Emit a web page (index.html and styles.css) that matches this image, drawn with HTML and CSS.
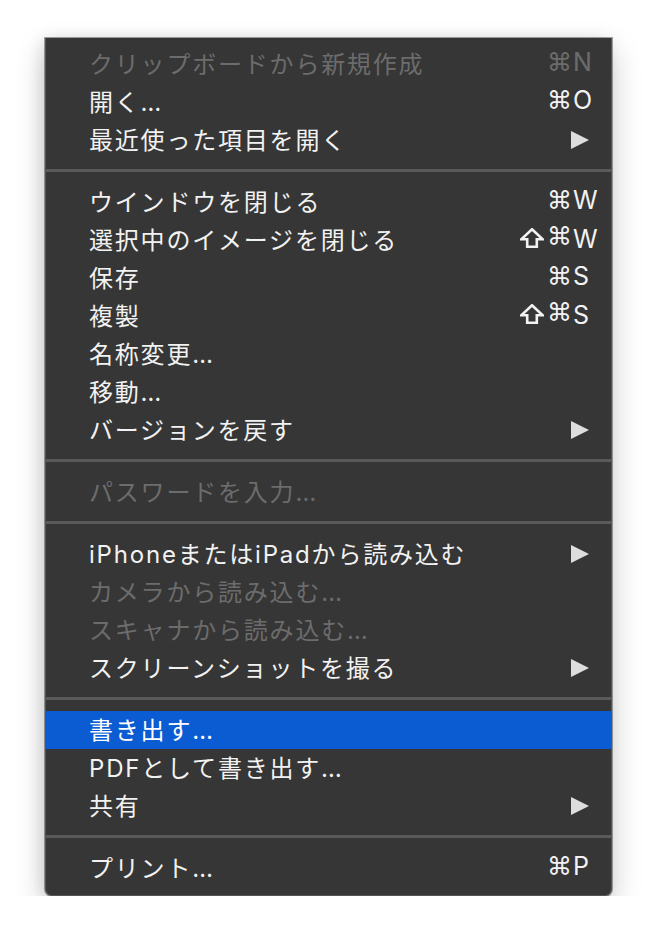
FILE: index.html
```html
<!DOCTYPE html>
<html lang="ja">

<head>
  <meta charset="UTF-8" />
  <meta name="viewport" content="width=device-width, initial-scale=1.0" />
  <title>ファイル メニュー</title>
  <link rel="stylesheet" href="styles.css">
</head>

<body>
  <div class="menu">
    <div class="item disabled"><span class="label">クリップボードから新規作成</span><span class="keys"><span class="mods">⌘</span><span class="key">N</span></span></div>
    <div class="item"><span class="label">開く…</span><span class="keys"><span class="mods">⌘</span><span class="key">O</span></span></div>
    <div class="item"><span class="label">最近使った項目を開く</span><span class="arrow"></span></div>

    <div class="sep"></div>

    <div class="item"><span class="label">ウインドウを閉じる</span><span class="keys"><span class="mods">⌘</span><span class="key">W</span></span></div>
    <div class="item"><span class="label">選択中のイメージを閉じる</span><span class="keys"><span class="mods"><svg class="shift" viewBox="0 0 24 20"><path d="M12 1.3 L22.7 11.3 H16.8 V18.8 H7.2 V11.3 H1.3 Z" /></svg>⌘</span><span class="key">W</span></span></div>
    <div class="item"><span class="label">保存</span><span class="keys"><span class="mods">⌘</span><span class="key">S</span></span></div>
    <div class="item"><span class="label">複製</span><span class="keys"><span class="mods"><svg class="shift" viewBox="0 0 24 20"><path d="M12 1.3 L22.7 11.3 H16.8 V18.8 H7.2 V11.3 H1.3 Z" /></svg>⌘</span><span class="key">S</span></span></div>
    <div class="item"><span class="label">名称変更…</span></div>
    <div class="item"><span class="label">移動…</span></div>
    <div class="item"><span class="label">バージョンを戻す</span><span class="arrow"></span></div>

    <div class="sep"></div>

    <div class="item disabled"><span class="label">パスワードを入力…</span></div>

    <div class="sep"></div>

    <div class="item"><span class="label">iPhoneまたはiPadから読み込む</span><span class="arrow"></span></div>
    <div class="item disabled"><span class="label">カメラから読み込む…</span></div>
    <div class="item disabled"><span class="label">スキャナから読み込む…</span></div>
    <div class="item"><span class="label">スクリーンショットを撮る</span><span class="arrow"></span></div>

    <div class="sep"></div>

    <div class="item active"><span class="label">書き出す…</span></div>
    <div class="item"><span class="label">PDFとして書き出す…</span></div>
    <div class="item"><span class="label">共有</span><span class="arrow"></span></div>

    <div class="sep"></div>

    <div class="item"><span class="label">プリント…</span><span class="keys"><span class="mods">⌘</span><span class="key">P</span></span></div>
  </div>
</body>

</html>
```

FILE: styles.css
```css
* {
  box-sizing: border-box;
}

body {
  margin: 0;
  background: #fff;
  font-family: "Inter", "Noto Sans CJK JP", sans-serif;
}

.menu {
  width: 567px;
  margin: 38px 0 0 45px;
  padding: 7px 0 8px 0;
  background: #363636;
  border: 1px solid #555;
  border-top: none;
  border-radius: 0 0 7px 7px;
  box-shadow: 0 0 0 1px rgba(0, 0, 0, 0.35), 0 12px 30px rgba(0, 0, 0, 0.22), -4px 0 14px rgba(0, 0, 0, 0.08);
}

.item {
  height: 38px;
  display: flex;
  align-items: center;
  padding: 0 9px 4px 43px;
  color: #f2f2f2;
  font-size: 24px;
  letter-spacing: 1.8px;
}

.item.disabled {
  color: #6c6c6c;
}

.item.active {
  background: #0b5bd3;
  color: #fff;
}

.item .label {
  flex: 1;
  white-space: nowrap;
}

.keys {
  display: flex;
  align-items: baseline;
  letter-spacing: 0;
}

.keys .mods {
  display: flex;
  align-items: center;
  font-family: "DejaVu Sans", sans-serif;
  font-size: 25px;
}

.shift {
  width: 24px;
  height: 20px;
  margin: 2px 3px 0 0;
  fill: none;
  stroke: currentColor;
  stroke-width: 2.6;
  stroke-linejoin: miter;
}

.keys .key {
  width: 30px;
  padding-left: 1px;
  font-size: 25px;
}

.arrow {
  width: 0;
  height: 0;
  margin: 4px 13px 0 0;
  border-left: 18px solid #dddddd;
  border-top: 9px solid transparent;
  border-bottom: 9px solid transparent;
}

.sep {
  height: 24px;
  padding-top: 10px;
}

.sep::after {
  content: "";
  display: block;
  height: 3px;
  background: #5a5a5a;
}
```
